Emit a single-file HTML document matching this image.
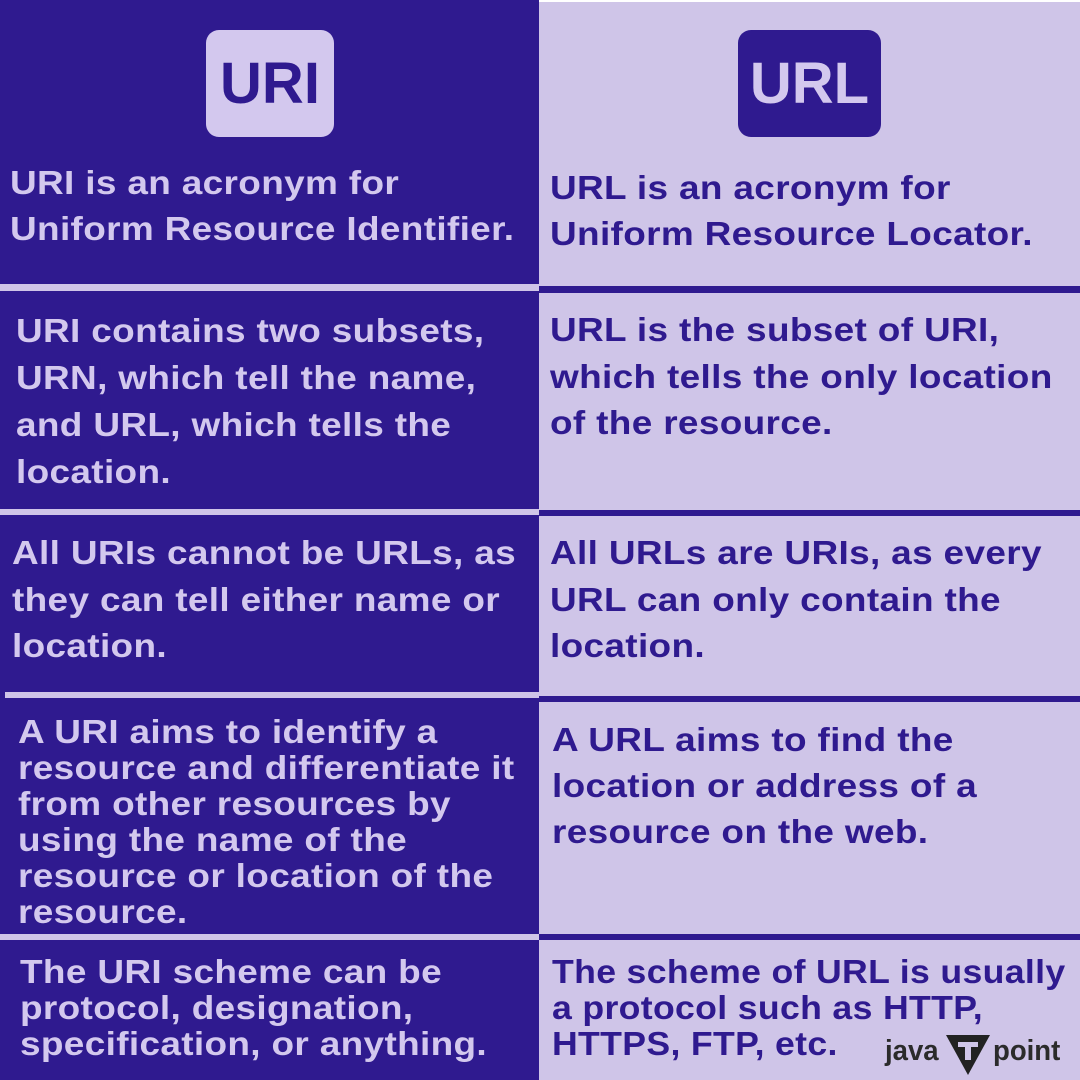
<!DOCTYPE html>
<html><head><meta charset="utf-8"><style>
*{margin:0;padding:0;box-sizing:border-box}
body{width:1080px;height:1080px;position:relative;overflow:hidden;background:#fff;font-family:"Liberation Sans",sans-serif;font-weight:bold}
.d{position:absolute;background:#2f1a8f}
.l{position:absolute;background:#cfc5e8}
.t{position:absolute;font-size:33px;white-space:nowrap;letter-spacing:0.3px;transform:scaleX(1.12);transform-origin:0 0}
.tl{color:#d3c8ee}
.tr{color:#2f1a8f}
.badge{position:absolute;border-radius:13px;font-size:58px;display:flex;align-items:center;justify-content:center}
</style></head><body>
<div class="d" style="left:0;top:0;width:539px;height:1080px"></div>
<div class="l" style="left:539px;top:2px;width:541px;height:1078px"></div>
<div class="l" style="left:0;top:284px;width:539px;height:7px"></div>
<div class="l" style="left:0;top:509px;width:539px;height:6px"></div>
<div class="l" style="left:5px;top:692px;width:534px;height:6px"></div>
<div class="l" style="left:0;top:934px;width:539px;height:6px"></div>
<div class="d" style="left:539px;top:286px;width:541px;height:7px"></div>
<div class="d" style="left:539px;top:510px;width:541px;height:6px"></div>
<div class="d" style="left:539px;top:696px;width:541px;height:6px"></div>
<div class="d" style="left:539px;top:934px;width:541px;height:6px"></div>

<div class="badge" style="left:206px;top:30px;width:128px;height:107px;background:#d3c8ee;color:#2f1a8f">URI</div>
<div class="badge" style="left:738px;top:30px;width:143px;height:107px;background:#2f1a8f;color:#d3c8ee">URL</div>

<div class="t tl" style="left:10px;top:160px;line-height:46px">URI is an acronym for<br>Uniform Resource Identifier.</div>
<div class="t tl" style="left:16px;top:307px;line-height:47px">URI contains two subsets,<br>URN, which tell the name,<br>and URL, which tells the<br>location.</div>
<div class="t tl" style="left:12px;top:530px;line-height:46.5px">All URIs cannot be URLs, as<br>they can tell either name or<br>location.</div>
<div class="t tl" style="left:18px;top:714px;line-height:36px">A URI aims to identify a<br>resource and differentiate it<br>from other resources by<br>using the name of the<br>resource or location of the<br>resource.</div>
<div class="t tl" style="left:20px;top:954px;line-height:36px">The URI scheme can be<br>protocol, designation,<br>specification, or anything.</div>

<div class="t tr" style="left:550px;top:165px;line-height:46px">URL is an acronym for<br>Uniform Resource Locator.</div>
<div class="t tr" style="left:550px;top:307px;line-height:46.5px">URL is the subset of URI,<br>which tells the only location<br>of the resource.</div>
<div class="t tr" style="left:550px;top:530px;line-height:46.5px">All URLs are URIs, as every<br>URL can only contain the<br>location.</div>
<div class="t tr" style="left:552px;top:717px;line-height:46px">A URL aims to find the<br>location or address of a<br>resource on the web.</div>
<div class="t tr" style="left:552px;top:954px;line-height:36px;transform:scaleX(1.08)">The scheme of URL is usually<br>a protocol such as HTTP,<br>HTTPS, FTP, etc.</div>

<div style="position:absolute;left:885px;top:1035px;font-size:29px;color:#2b2b2b;font-weight:bold;transform:scaleX(0.95);transform-origin:0 0">java</div>
<svg style="position:absolute;left:945px;top:1034px" width="46" height="42" viewBox="0 0 46 42"><polygon points="1,1 45,1 23,41" fill="#222"/><rect x="13" y="8" width="20" height="5" fill="#cfc5e8"/><rect x="20" y="8" width="6" height="18" fill="#cfc5e8"/></svg>
<div style="position:absolute;left:993px;top:1035px;font-size:29px;color:#2b2b2b;font-weight:bold;transform:scaleX(0.95);transform-origin:0 0">point</div>
</body></html>
